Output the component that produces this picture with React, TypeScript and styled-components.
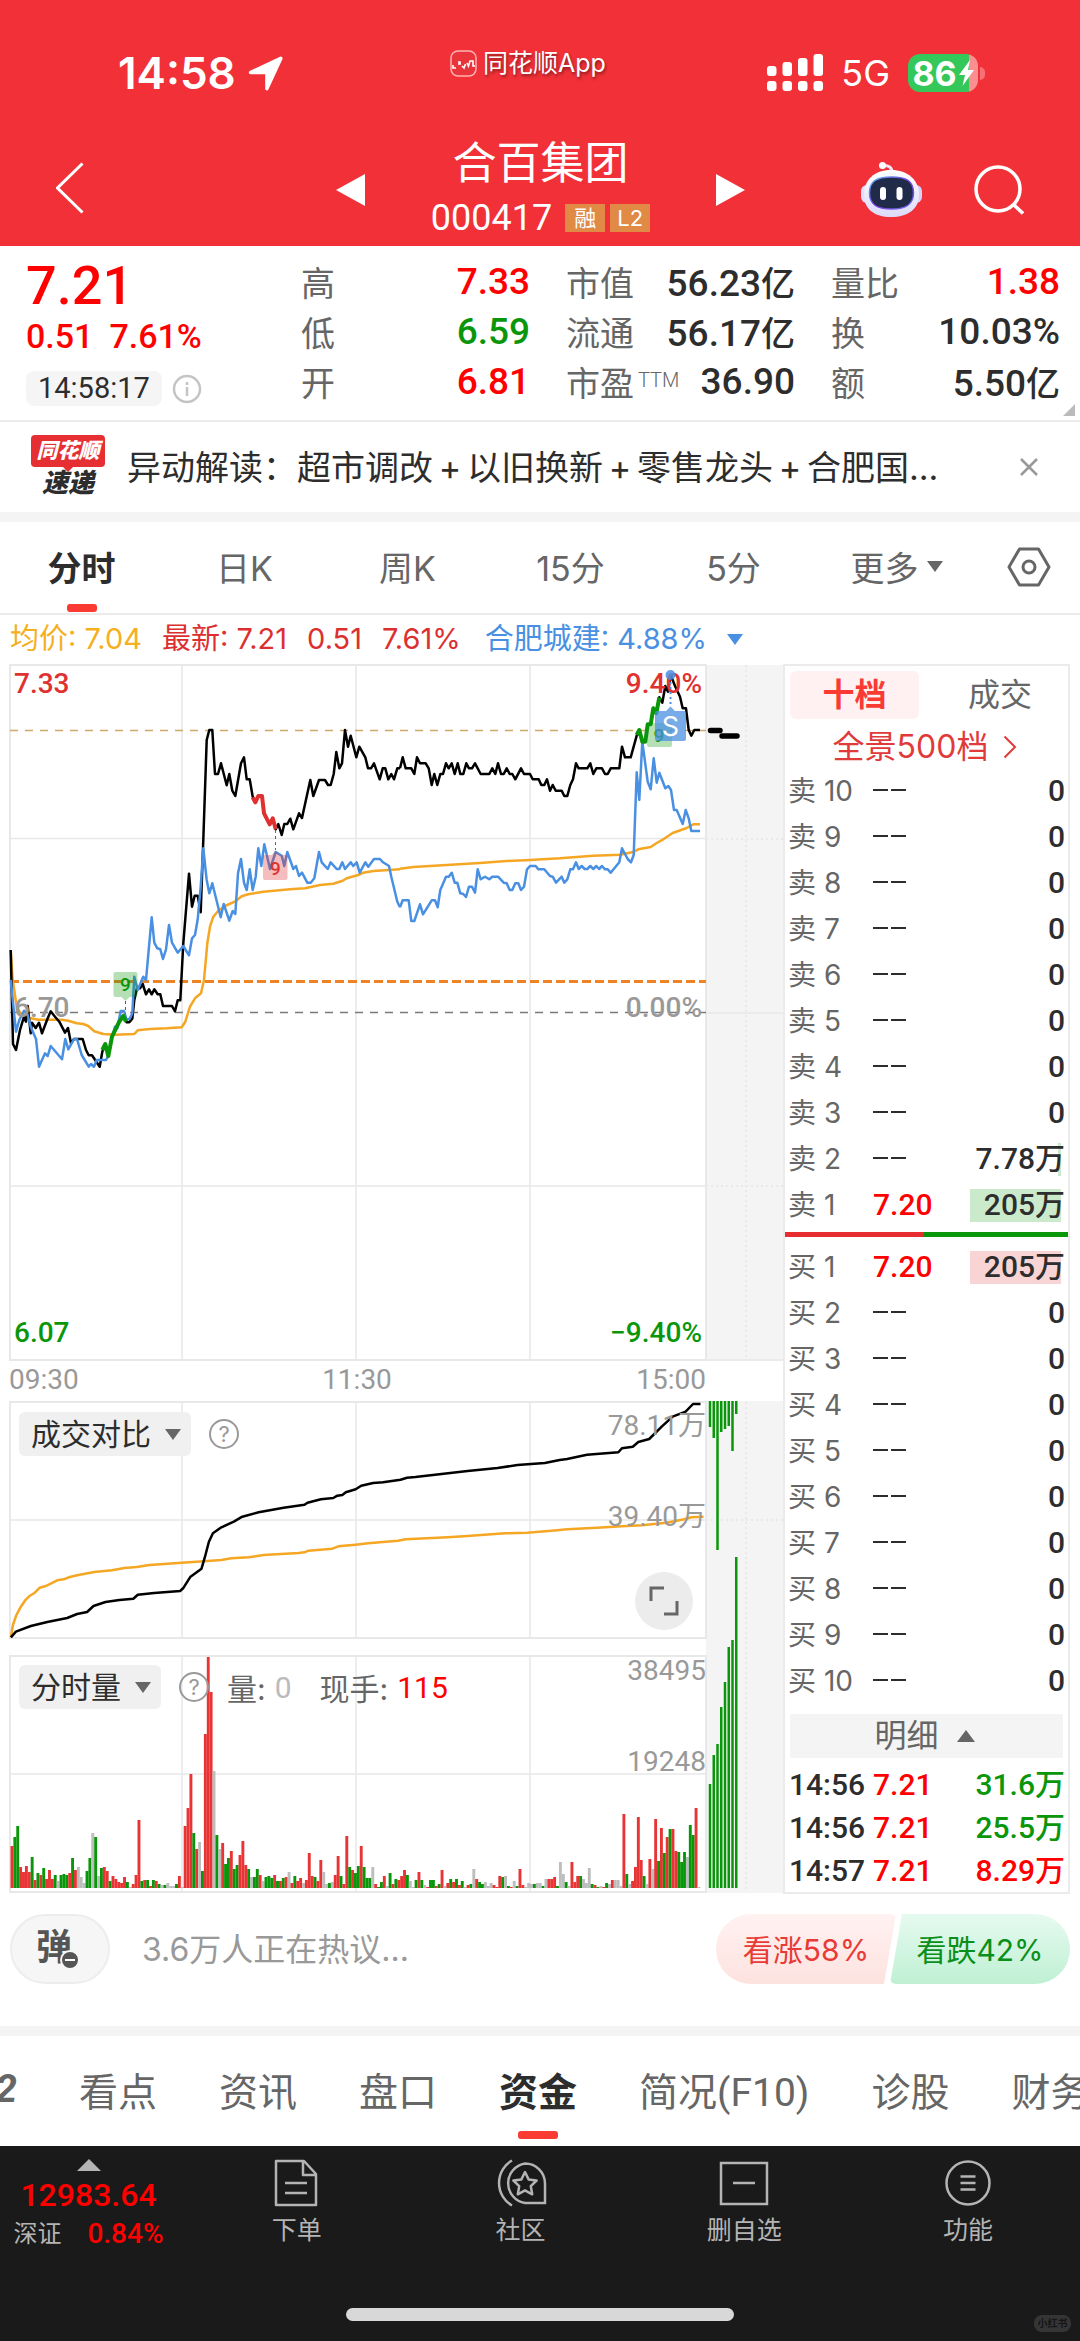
import React from "react";
import styled, { createGlobalStyle } from "styled-components";

const SANS = `"Inter", "Noto Sans CJK SC", sans-serif`;
const NUM = `"Roboto", "Noto Sans CJK SC", sans-serif`;

const C = {
  brand: "#f13037",
  red: "#ff0000",
  green: "#0a960a",
  ink: "#2d2d2d",
  sub: "#666666",
  mute: "#999999",
  line: "#ebebeb",
  band: "#f4f4f4",
  accent: "#f93b34",
  blue: "#4a90e2",
  orange: "#f5a623",
};

const Global = createGlobalStyle`
  *, *::before, *::after { box-sizing: border-box; }
  body { margin: 0; background: #fff; color: ${C.ink}; font-family: ${SANS}; }
  button, select { font: inherit; color: inherit; background: none; border: 0; padding: 0; margin: 0; }
  a { color: inherit; text-decoration: none; }
  dl, dd, h1, p { margin: 0; font-weight: 400; }
  svg { display: block; }
`;

const Page = styled.div`
  display: flex;
  flex-direction: column;
  min-height: 100vh;
  overflow: hidden;
`;

/* ---------- header ---------- */

const Header = styled.header`
  background: ${C.brand};
  color: #fff;
  padding-bottom: 4px;
`;

const StatusBar = styled.div`
  display: grid;
  grid-template-columns: 332px auto 1fr;
  align-items: center;
  padding: 46px 95px 0 118px;
  height: 98px;
`;

const Clock = styled.div`
  display: flex;
  align-items: center;
  gap: 12px;
  font-size: 44px;
  font-weight: 600;
`;

const AppTag = styled.div`
  display: flex;
  align-items: center;
  align-self: start;
  gap: 6px;
  font-size: 25px;
  line-height: 34px;
  text-shadow: 1px 2px 3px rgba(0, 0, 0, 0.45);
`;

const Signals = styled.div`
  display: flex;
  justify-content: flex-end;
  align-items: center;
  gap: 18px;
  font-size: 36px;
`;

const Battery = styled.div`
  display: flex;
  align-items: center;
  gap: 2px;
`;

const BatteryCell = styled.div`
  display: flex;
  align-items: center;
  justify-content: center;
  gap: 2px;
  width: 70px;
  height: 38px;
  border-radius: 12px;
  background: linear-gradient(to right, #34c759 87%, #f98f90 87%);
  font-size: 34px;
  font-weight: 700;
`;

const BatteryTip = styled.i`
  width: 5px;
  height: 13px;
  border-radius: 0 5px 5px 0;
  background: #f67075;
`;

const NavBar = styled.div`
  display: grid;
  grid-template-columns: 280px 1fr 279px;
  align-items: center;
  padding: 40px 56px 0;
`;

const IconButton = styled.button`
  display: inline-flex;
  cursor: pointer;
`;

const NavActions = styled.div`
  display: flex;
  justify-content: flex-end;
  align-items: center;
  gap: 52px;
`;

const TitleRow = styled.div`
  display: flex;
  justify-content: space-between;
  align-items: center;
`;

const StockTitle = styled.div`
  display: flex;
  flex-direction: column;
  align-items: center;
`;

const StockName = styled.h1`
  font-size: 44px;
  line-height: 50px;
`;

const CodeLine = styled.div`
  display: flex;
  align-items: center;
  gap: 5px;
  margin-top: 6px;
  font: 400 36px/48px ${NUM};
`;

const Badge = styled.span`
  width: 40px;
  margin-left: ${(p: { $first?: boolean }) => (p.$first ? "8px" : "0")};
  background: #e08a45;
  font: 400 22px/28px ${SANS};
  text-align: center;
`;

/* ---------- quote ---------- */

const Quote = styled.section`
  position: relative;
  display: grid;
  grid-template-columns: 239px repeat(3, 1fr);
  gap: 36px;
  padding: 10px 20px 14px 26px;
  border-bottom: 2px solid ${C.line};
  font-family: ${NUM};
`;

const LastPrice = styled.div`
  font-size: 54px;
  font-weight: 500;
  line-height: 60px;
  color: ${C.red};
`;

const Change = styled.div`
  display: flex;
  gap: 16px;
  font-size: 34px;
  font-weight: 500;
  line-height: 40px;
  color: ${C.red};
`;

const StampRow = styled.div`
  display: flex;
  align-items: center;
  gap: 10px;
  margin-top: 15px;
`;

const Stamp = styled.time`
  padding: 0 12px;
  border-radius: 8px;
  background: #f5f5f5;
  font-size: 29px;
  line-height: 35px;
`;

const Stats = styled.dl`
  display: grid;
  grid-auto-rows: 50px;
`;

const Stat = styled.div`
  display: flex;
  justify-content: space-between;
  align-items: center;
`;

const StatLabel = styled.dt`
  font-size: 34px;
  color: ${C.sub};

  sup {
    font: 300 20px ${NUM};
    vertical-align: 9px;
    margin-left: 4px;
  }
`;

const StatValue = styled.dd<{ $color?: string }>`
  font-size: 37px;
  font-weight: 500;
  color: ${(p) => p.$color || C.ink};

  span {
    font-size: 34px;
  }
`;

const Corner = styled.i`
  position: absolute;
  right: 5px;
  bottom: 4px;
  border-style: solid;
  border-width: 0 0 12px 12px;
  border-color: transparent transparent #bbb transparent;
`;

/* ---------- news ---------- */

const News = styled.section`
  display: flex;
  align-items: center;
  gap: 22px;
  height: 90px;
  padding: 0 42px 0 31px;
`;

const NewsLogo = styled.div`
  flex: none;
  width: 74px;
  font-style: italic;
  font-weight: 900;
  text-align: center;
`;

const LogoTop = styled.div`
  position: relative;
  border-radius: 4px;
  background: #e62f33;
  color: #fff;
  font-size: 21px;
  line-height: 32px;

  &::after {
    content: "";
    position: absolute;
    left: 32px;
    top: 32px;
    border: 5px solid transparent;
    border-top-color: #e62f33;
  }
`;

const LogoBottom = styled.div`
  font-size: 26px;
  line-height: 32px;
`;

const NewsText = styled.a`
  flex: 1;
  min-width: 0;
  overflow: hidden;
  white-space: nowrap;
  font-size: 34px;
  padding-bottom: 4px;
`;

const Plus = styled.span`
  display: inline-block;
  width: 34px;
  text-align: center;
`;

const Band = styled.div`
  height: 10px;
  background: ${C.band};
`;

/* ---------- period tabs ---------- */

const Periods = styled.nav`
  display: grid;
  grid-template-columns: repeat(6, 163fr) 102fr;
  border-bottom: 2px solid ${C.line};
`;

const Period = styled.button<{ $active?: boolean }>`
  display: flex;
  align-items: center;
  justify-content: center;
  position: relative;
  gap: 8px;
  height: 91px;
  padding-bottom: 2px;
  font-size: 34px;
  font-weight: ${(p) => (p.$active ? 700 : 400)};
  color: ${(p) => (p.$active ? C.ink : C.sub)};

  &::after {
    content: "";
    display: ${(p) => (p.$active ? "block" : "none")};
    position: absolute;
    bottom: 1px;
    width: 30px;
    height: 8px;
    border-radius: 3px;
    background: ${C.accent};
  }
`;

const Legend = styled.div`
  display: flex;
  align-items: center;
  gap: 20px;
  padding: 3px 10px 0;
  font-size: 29px;
  line-height: 42px;
  white-space: nowrap;
`;

const LegendItem = styled.span<{ $color: string; $wide?: boolean }>`
  color: ${(p) => p.$color};
  margin-left: ${(p) => (p.$wide ? "4px" : "0")};
`;

const Down = styled.i<{ $color?: string; $size?: number }>`
  border-style: solid;
  border-width: ${(p) => `11px ${p.$size || 8}px 0`};
  border-color: ${(p) => p.$color || C.sub} transparent transparent;
`;

const Up = styled.i<{ $color?: string; $size?: number }>`
  border-style: solid;
  border-width: ${(p) => `0 ${p.$size || 9}px 12px`};
  border-color: transparent transparent ${(p) => p.$color || C.sub};
`;

/* ---------- charts ---------- */

const Market = styled.section`
  display: grid;
  grid-template-columns: minmax(0, 1fr) 287px;
  align-items: start;
  padding-right: 10px;
`;

const ChartBox = styled.div`
  position: relative;

  > svg {
    width: 100%;
    height: auto;
  }
`;

const ChartTools = styled.div<{ $top: number }>`
  position: absolute;
  left: 19px;
  top: ${(p) => p.$top}px;
  display: flex;
  align-items: center;
  font-size: 30px;
  color: ${C.sub};
`;

const Picker = styled.label`
  display: flex;
  align-items: center;
  gap: 14px;
  height: 44px;
  padding: 0 10px 0 12px;
  border-radius: 6px;
  background: #f0f0f0;
  color: ${C.ink};

  select {
    appearance: none;
    line-height: 44px;
    height: 44px;
  }
`;

const Help = styled.button`
  width: 30px;
  height: 30px;
  margin: 0 18px;
  border: 2px solid ${C.mute};
  border-radius: 50%;
  color: ${C.mute};
  font-size: 22px;
  line-height: 26px;
`;

const Reading = styled.span<{ $color: string }>`
  margin: 0 28px 0 9px;
  font-family: ${NUM};
  color: ${(p) => p.$color};
`;

const Expand = styled.button`
  position: absolute;
  left: 635px;
  top: 912px;
  display: flex;
  align-items: center;
  justify-content: center;
  width: 58px;
  height: 58px;
  border-radius: 50%;
  background: #ececec;
`;

type Frame = { ox: number; oy: number; sx: number; sy: number };

const plot = (raw: string, f: Frame) =>
  raw
    .trim()
    .split(/\s+/)
    .map((p) => {
      const [x, y] = p.split(",").map(Number);
      return `${(f.ox + x * f.sx).toFixed(1)},${(f.oy + y * f.sy).toFixed(1)}`;
    })
    .join(" ");

const AM: Frame = { ox: 0, oy: 0, sx: 1 / 3, sy: 1 / 3 };
const PM: Frame = { ox: 380, oy: 0, sx: 1 / 3, sy: 1 / 3 };
const TURNOVER: Frame = { ox: 0, oy: 630, sx: 0.4975, sy: 1 / 3 };

const PRICE_AM = `32,870 39,1152 48,1170 60,1110 72,1070 78,1085 83,1038 92,1120 96,1088 107,1104 117,1088 126,1120 143,1075
152,1054 165,1070 178,1085 195,1118 204,1104 213,1150 222,1137 248,1137 258,1170 266,1186 276,1186 299,1220 307,1175 316,1152
325,1188 336,1130 358,1085 370,1068 380,1087 388,1087 397,1076 403,1020 412,980 420,985 428,972 438,1003 447,988 455,1003 463,988
473,1003 481,1003 489,1038 516,1038 525,1054 533,1021 541,1021 550,850 567,641 576,740 584,707 593,707 602,757 610,540 620,240
628,210 637,210 645,342 654,342 663,310 680,376 688,342 697,392 706,408 723,310 732,292 740,358 749,358 758,410 766,427 775,408
786,408 792,460 809,493 818,475 827,508 835,492 845,525 853,492 862,492 871,476 880,508 897,460 906,474 931,360 940,408 957,360
975,360 984,375 992,375 1001,342 1009,276 1018,325 1026,310 1035,210 1044,260 1052,227 1069,292 1078,260 1096,292 1104,325
1113,325 1122,310 1139,358 1148,325 1156,325 1165,358 1174,342 1182,358 1192,325 1200,325`;

const PRICE_PM = `60,325 68,292 77,325 94,325 103,342 111,292 120,310 137,310 146,325 155,375 163,342 172,375 181,342 189,342
198,310 206,325 215,310 224,342 233,310 241,342 250,342 259,310 267,325 276,325 285,310 302,342 328,342 337,325 346,342 354,310
363,342 371,342 380,325 389,342 397,342 406,358 423,325 432,342 450,342 458,358 476,358 484,375 493,375 501,358 510,392 518,375
527,392 545,392 553,408 562,408 571,375 579,358 588,310 596,325 622,325 631,310 640,342 649,325 666,325 675,342 683,342 692,325
718,325 726,260 735,292 752,292 770,227 778,210 787,245 796,245 803,193 812,193 820,145 829,160 838,112 847,128 856,78 864,95
872,45 885,78 900,110 908,145 918,145 926,210 934,227 943,210 960,210`;

const AVG_AM = `32,870 38,960 50,1040 62,1060 85,1073 115,1079 185,1079 205,1082 230,1090 250,1092 265,1098 283,1114 310,1122
345,1124 403,1122 413,1111 450,1107 500,1105 545,1102 556,1085 570,1040 585,1015 603,1000 612,960 622,850 630,800 640,770 655,752
675,738 706,724 725,709 745,703 790,695 870,688 915,685 960,675 1000,671 1028,662 1040,655 1075,645 1090,638 1120,633 1200,628`;

const AVG_PM = `60,626 100,621 200,615 300,609 380,603 450,600 540,595 600,590 640,587 720,584 760,576 775,568 812,561 830,549
850,538 878,519 920,504 940,493 960,493`;

const PEER_AM = `32,960 48,1115 58,1080 72,1052 83,1065 92,1100 108,1137 117,1220 135,1180 143,1188 152,1158 186,1198 196,1137
205,1168 222,1137 231,1137 245,1185 266,1220 273,1212 282,1220 290,1200 318,1200 325,1188 335,1135 345,1100 352,1105 362,1053
372,1053 380,1080 390,1075 397,1060 403,950 413,990 430,950 438,960 447,860 455,772 463,848 472,865 481,868 489,897 498,868
507,795 516,848 533,878 550,858 567,886 576,835 585,825 593,778 602,680 610,565 620,660 628,700 637,670 662,772 671,732 688,782
698,753 706,762 714,640 723,597 732,668 740,690 749,628 758,690 767,650 775,565 784,618 793,553 810,627 827,576 845,587 853,618
862,576 880,627 888,618 897,648 906,638 922,668 932,668 943,655 957,576 965,607 983,627 992,607 1010,627 1018,627 1027,607
1035,627 1052,607 1060,618 1070,607 1079,638 1096,607 1105,620 1122,597 1140,597 1149,607 1167,618 1174,650 1192,725 1200,742`;

const PEER_PM = `60,742 68,721 86,721 94,783 103,783 120,733 129,763 155,721 165,721 173,742 181,690 198,650 206,650 215,638
224,668 232,668 241,700 250,702 258,711 267,680 276,680 285,698 293,628 302,658 315,650 328,658 337,650 354,650 371,668 380,670
389,690 397,690 406,670 415,670 423,690 432,680 441,628 450,618 467,618 475,628 493,628 510,648 518,650 528,668 545,650 553,668
562,658 571,628 579,628 588,607 596,627 605,618 614,627 622,627 631,618 640,627 649,618 657,627 666,618 675,628 683,628 692,638
718,607 726,565 743,597 753,607 761,585 770,337 778,420 787,245 803,365 812,388 821,295 830,368 838,338 856,385 865,378 873,390
882,450 890,450 908,492 917,450 926,475 934,513 960,513`;

const TODAY = `22,1042 32,1025 62,1008 95,996 135,984 155,972 175,966 188,948 212,936 240,930 268,926 277,914 310,909 362,903
368,895 383,860 405,836 412,800 420,755 428,730 445,712 470,695 487,680 520,667 570,653 612,644 618,638 645,628 670,624 678,617
688,615 695,607 715,598 726,587 750,579 770,577 805,569 818,563 835,561 940,543 1000,534 1040,525 1095,519 1125,510 1140,507
1180,494 1243,487 1250,475 1272,470 1283,456 1305,447 1330,410 1352,380 1378,365 1393,342 1408,342`;

const PREVIOUS = `22,1042 26,1005 33,975 40,955 50,932 60,917 70,908 80,893 92,888 103,880 115,871 128,868 140,861 160,854
190,846 225,841 250,834 275,831 300,825 330,822 365,818 410,814 445,810 465,805 500,802 530,795 600,789 612,787 620,782 668,776
680,769 715,764 740,760 800,752 815,748 900,742 940,738 1015,730 1060,728 1120,721 1140,718 1200,713 1250,709 1290,706 1340,698
1375,688 1390,682 1414,680`;

/* one entry per minute: r = up, g = down, n = flat, followed by the bar height */
const VOLUME = `r42 g51 g62 r21 r16 r22 r16 g31 r8 g15 r13 g20 r9 r18 r9 g13 n7 g13 g14 g13 r15 g30 r18 n21 n11 n5 g17 g30
n55 g51 n12 g20 r21 r17 g7 r12 r9 r6 r5 r11 g6 n1 r4 r13 r68 g7 r8 g8 r2 g8 r7 g4 n3 g3 n5 n2 n2 g4 r12 n1 r62 r80 r114 g55
r39 n46 g17 r154 r231 r196 n117 g53 n39 r45 g24 g30 r37 g19 g23 r33 r47 r23 g19 n11 g11 g19 r13 n7 g11 g12 g10 r13 g7 r7 g10
r11 n16 r5 g12 r7 r10 n5 r8 r35 r12 g11 r7 r28 n16 n4 g5 n6 r13 r32 g12 r4 r52 g21 r18 g15 g22 r42 g21 g10 g10 n21 r4 g1 g6
r12 n2 g15 r4 g9 r8 r12 r18 g13 n7 n1 g8 r16 g8 n3 r1 g8 g8 r2 g4 r18 n2 r5 g9 r6 g9 r3 g7 n1 r3 g4 n19 r9 g6 g4 n6 n2 n5 r3
r1 r12 g11 n12 g2 r1 n7 g2 r19 r3 n1 n5 n4 g4 n5 n5 g2 n9 r9 r9 r11 g2 n26 n14 g6 n2 r26 r6 r12 g12 n9 n5 n20 g4 r3 g1 n2 r1
g5 n4 r8 n8 n8 n2 r74 g14 n4 r7 r21 r71 r28 g12 n4 r29 n19 r69 g27 r60 g35 r51 g59 r59 r37 g36 g26 g36 n31 g63 g53 r80 n1`;

const BAR_COLOR: Record<string, string> = { r: "#e83434", g: "#0a960a", n: "#bdbdbd" };

const AFTER_TOP = [767, 778, 890, 772, 769, 766, 791, 754];
const AFTER_VOLUME = [1124, 1095, 1084, 1047, 1022, 987, 980, 897];

const Label = styled.text<{ $end?: boolean; $mid?: boolean; $bold?: boolean }>`
  font-family: ${NUM};
  font-size: 28px;
  font-weight: ${(p) => (p.$bold ? 500 : 400)};
  text-anchor: ${(p) => (p.$end ? "end" : p.$mid ? "middle" : "start")};
`;

function Charts() {
  const bars = VOLUME.trim().split(/\s+/);
  const step = 687 / (bars.length - 1);
  const line = { fill: "none", strokeLinejoin: "round" as const };
  return (
    <svg viewBox="0 0 783 1233" role="img" aria-label="分时走势">
      <rect x="706" y="5" width="77" height="696" fill={C.band} />
      <rect x="706" y="741" width="77" height="492" fill={C.band} />
      <g stroke="#e8e8e8" strokeWidth="2" fill="none">
        <rect x="10" y="5" width="696" height="695" />
        <rect x="10" y="742" width="696" height="236" />
        <rect x="10" y="996" width="696" height="236" />
        <path d="M10 178.500H706M10 526H706M10 860H706M10 1114H706" strokeWidth="1.500" />
        {[182, 356, 530].map((x) => (
          <path key={x} d={`M${x} 5V700M${x} 742V978M${x} 996V1232`} strokeWidth="1.500" />
        ))}
        <path d="M746 5V700M746 742V1232M706 179H783M706 526H783M706 860H783" stroke="#e9e9e9" strokeDasharray="2 3" />
        <path d="M706 353H783M706 700H783" stroke="#ebebeb" />
      </g>

      <path d="M10 70.500H706" stroke="#cfa968" strokeWidth="1.500" strokeDasharray="8 7" />
      <path d="M10 352.500H706" stroke="#7a7a7a" strokeWidth="1.500" strokeDasharray="8 7" />
      <path d="M10 321.500H706" stroke="#ef8222" strokeWidth="2.800" strokeDasharray="9 4" />

      <g {...line} stroke={C.orange} strokeWidth="2.500">
        <polyline points={plot(AVG_AM, AM)} />
        <polyline points={plot(AVG_PM, PM)} />
        <polyline points={plot(PREVIOUS, TURNOVER)} />
      </g>
      <g {...line} stroke="#000" strokeWidth="2.500">
        <polyline points={plot(PRICE_AM, AM)} />
        <polyline points={plot(PRICE_PM, PM)} />
        <polyline points={plot(TODAY, TURNOVER)} />
      </g>
      <g {...line} stroke={C.blue} strokeWidth="2.500">
        <polyline points={plot(PEER_AM, AM)} />
        <polyline points={plot(PEER_PM, PM)} />
      </g>
      <g {...line} strokeWidth="4">
        <polyline points={plot("307,1170 316,1152 325,1188 336,1130 358,1085 370,1068 378,1085", AM)} stroke="#0a960a" />
        <polyline points={plot("758,412 766,427 775,408 786,408 792,460 809,493 818,475 827,508", AM)} stroke="#e03131" />
        <polyline
          points={plot("770,225 778,210 787,245 796,245 803,193 812,193 820,145 829,160 838,112", PM)}
          stroke="#0a960a"
        />
      </g>
      <path d="M710.500 70.500H720M722 76H737" stroke="#000" strokeWidth="5.500" strokeLinecap="round" />

      <Label x="14" y="33" fill="#e03131" $bold>7.33</Label>
      <Label x="702" y="33" fill="#e03131" $end $bold>9.40%</Label>
      <Label x="14" y="357" fill={C.mute} $bold>6.70</Label>
      <Label x="702" y="357" fill={C.mute} $end $bold>0.00%</Label>
      <Label x="14" y="682" fill={C.green} $bold>6.07</Label>
      <Label x="702" y="682" fill={C.green} $end $bold>−9.40%</Label>
      <Label x="9" y="729" fill={C.mute}>09:30</Label>
      <Label x="357" y="729" fill={C.mute} $mid>11:30</Label>
      <Label x="706" y="729" fill={C.mute} $end>15:00</Label>

      <path d="M125.500 341V354" stroke={C.green} strokeDasharray="3 3" />
      <path d="M115.500 312h20a2 2 0 0 1 2 2v21a2 2 0 0 1-2 2h-6l-4 4-4-4h-6a2 2 0 0 1-2-2v-21a2 2 0 0 1 2-2z" fill="#0a960a" opacity="0.300" />
      <text x="125.500" y="331" textAnchor="middle" fontFamily="Roboto" fontSize="19" fontWeight="500" fill={C.green}>9</text>
      <path d="M275.500 170V190" stroke="#e03131" strokeDasharray="3 3" />
      <path d="M265 195h6.500l4-4 4 4h6a2 2 0 0 1 2 2v21a2 2 0 0 1-2 2h-20.500a2 2 0 0 1-2-2v-21a2 2 0 0 1 2-2z" fill="#e03131" opacity="0.320" />
      <text x="275.500" y="215" textAnchor="middle" fontFamily="Roboto" fontSize="19" fontWeight="500" fill="#e03131">9</text>
      <rect x="647" y="63" width="25" height="24" rx="2" fill="#0a960a" opacity="0.300" />
      <text x="659" y="82" textAnchor="middle" fontFamily="Roboto" fontSize="19" fontWeight="500" fill={C.green}>9</text>
      <circle cx="670.500" cy="15" r="5" fill={C.blue} opacity="0.850" />
      <path d="M670.500 22V46" stroke={C.blue} strokeWidth="2" strokeDasharray="2 3" />
      <path d="M657 51h9l4.500-4.500 4.500 4.500h9a2 2 0 0 1 2 2v26a2 2 0 0 1-2 2h-27a2 2 0 0 1-2-2v-26a2 2 0 0 1 2-2z" fill={C.blue} opacity="0.750" />
      <text x="670.500" y="76" textAnchor="middle" fontFamily="Inter" fontSize="27" fill="#fff">S</text>

      <Label x="706" y="775" fill={C.mute} $end>78.11万</Label>
      <Label x="706" y="866" fill={C.mute} $end>39.40万</Label>
      <g stroke="#0a960a" strokeWidth="2.500">
        {AFTER_TOP.map((y, i) => (
          <path key={i} d={`M${710 + i * 3.75} 741V${y}`} />
        ))}
        {AFTER_VOLUME.map((y, i) => (
          <path key={i} d={`M${710 + i * 3.75} 1228V${y}`} />
        ))}
      </g>

      {bars.map((b, i) => {
        const h = Number(b.slice(1));
        return <rect key={i} x={10.5 + i * step} y={1228 - h} width="2.900" height={h} fill={BAR_COLOR[b[0]]} />;
      })}
      <Label x="706" y="1020" fill={C.mute} $end>38495</Label>
      <Label x="706" y="1111" fill={C.mute} $end>19248</Label>
    </svg>
  );
}

/* ---------- order book ---------- */

const Book = styled.aside`
  margin-top: 4px;
  border: 2px solid ${C.line};
  padding: 5px 0 0;
`;

const BookTabs = styled.div`
  display: grid;
  grid-template-columns: 129px 1fr;
  padding: 0 5px;
`;

const BookTab = styled.button<{ $active?: boolean }>`
  height: 48px;
  border-radius: 6px;
  background: ${(p) => (p.$active ? "#fff1f1" : "transparent")};
  color: ${(p) => (p.$active ? C.accent : C.sub)};
  font-size: 32px;
  line-height: 48px;
  font-weight: ${(p) => (p.$active ? 700 : 400)};
  padding-left: ${(p) => (p.$active ? "0" : "18px")};
`;

const DepthLink = styled.a`
  display: flex;
  align-items: center;
  justify-content: center;
  gap: 15px;
  padding: 6px 3px 0 0;
  font-size: 32px;
  line-height: 43px;
  color: #e03a3a;
`;

const Levels = styled.table`
  width: 100%;
  table-layout: fixed;
  border-collapse: collapse;
  font: 500 30px ${NUM};

  td,
  th {
    padding: 0;
    line-height: 46px;
    height: 46px;
    white-space: nowrap;
  }
`;

const LevelName = styled.th`
  width: 88px;
  text-align: left;
  padding-left: 3px !important;
  font: 400 28px ${SANS};
  color: ${C.sub};
`;

const LevelPrice = styled.td<{ $on?: boolean }>`
  width: 76px;
  color: ${(p) => (p.$on ? C.red : C.ink)};
`;

const LevelQty = styled.td<{ $bar?: number; $tint?: string }>`
  padding-right: 3px !important;
  text-align: right;
  background: ${(p) =>
    p.$bar ? `linear-gradient(${p.$tint}, ${p.$tint}) no-repeat right 7px center / ${p.$bar}px 33px` : "none"};
`;

const Dash = styled.span`
  display: inline-block;
  width: 15px;
  height: 2px;
  margin-right: 3px;
  background: ${C.ink};
  vertical-align: 10px;
`;

const Ratio = styled.div`
  height: 5px;
  margin: 4px 0 7px;
  background: linear-gradient(to right, #e62e31 49%, ${C.green} 49%);
`;

const DetailBar = styled.button`
  display: flex;
  align-items: center;
  justify-content: center;
  gap: 18px;
  width: calc(100% - 10px);
  height: 44px;
  margin: 10px 5px 5px;
  padding-right: 4px;
  background: ${C.band};
  font-size: 32px;
  line-height: 44px;
  color: ${C.sub};
`;

const Ticks = styled(Levels)`
  td {
    height: 43px;
    line-height: 43px;
  }
`;

const Tick = styled.td<{ $color?: string; $w?: number; $end?: boolean }>`
  width: ${(p) => (p.$w ? `${p.$w}px` : "auto")};
  padding: ${(p) => (p.$end ? "0 3px 0 0" : "0")} !important;
  text-align: ${(p) => (p.$end ? "right" : "left")};
  color: ${(p) => p.$color || C.ink};
  text-indent: ${(p) => (p.$color ? "0" : "4px")};
`;

type Level = { name: string; price?: string; qty: string; bar?: number };

const SELLS: Level[] = [10, 9, 8, 7, 6, 5, 4, 3].map((n) => ({ name: `卖 ${n}`, qty: "0" }) as Level);
SELLS.push({ name: "卖 2", qty: "7.78万", bar: 3 }, { name: "卖 1", price: "7.20", qty: "205万", bar: 91 });
const BUYS: Level[] = [{ name: "买 1", price: "7.20", qty: "205万", bar: 91 }];
for (let n = 2; n <= 10; n++) BUYS.push({ name: `买 ${n}`, qty: "0" });

function LevelTable({ rows, tint }: { rows: Level[]; tint: string }) {
  return (
    <Levels>
      <tbody>
        {rows.map((r) => (
          <tr key={r.name}>
            <LevelName scope="row">{r.name}</LevelName>
            <LevelPrice $on={!!r.price}>
              {r.price || (
                <>
                  <Dash />
                  <Dash />
                </>
              )}
            </LevelPrice>
            <LevelQty $bar={r.bar} $tint={tint}>{r.qty}</LevelQty>
          </tr>
        ))}
      </tbody>
    </Levels>
  );
}

/* ---------- discussion ---------- */

const Talk = styled.section`
  display: flex;
  align-items: center;
  padding: 20px 10px 42px;
`;

const Danmu = styled.button`
  position: relative;
  width: 100px;
  height: 70px;
  border: 2px solid #ededed;
  border-radius: 35px;
  background: #f6f6f6;
  color: #555;
  font-size: 36px;
  line-height: 60px;
  font-weight: 700;
  padding: 0 12px 4px 0;
`;

const DanmuOff = styled.i`
  position: absolute;
  left: 48px;
  top: 34px;
  width: 20px;
  height: 20px;
  border: 2px solid #f6f6f6;
  border-radius: 50%;
  background: linear-gradient(#fff, #fff) no-repeat center / 10px 2px #555;
`;

const TalkHint = styled.a`
  flex: 1;
  margin-left: 32px;
  padding-bottom: 4px;
  font-size: 32px;
  color: ${C.mute};
`;

const Vote = styled.div`
  display: flex;
`;

const VoteButton = styled.button<{ $bull?: boolean }>`
  width: 180px;
  height: 70px;
  margin-left: ${(p) => (p.$bull ? "0" : "-6px")};
  padding-bottom: 2px;
  font-size: 30px;
  border-radius: ${(p) => (p.$bull ? "35px 6px 6px 35px" : "6px 35px 35px 6px")};
  clip-path: ${(p) =>
    p.$bull ? "polygon(0 0, 100% 0, 168px 100%, 0 100%)" : "polygon(12px 0, 100% 0, 100% 100%, 0 100%)"};
  background: ${(p) =>
    p.$bull ? "linear-gradient(#fff2f1, #fde2df)" : "linear-gradient(#e6faf0, #bff0d3)"};
  color: ${(p) => (p.$bull ? "#e83a36" : "#0a8f1a")};
`;

/* ---------- section tabs ---------- */

const Sections = styled.nav`
  display: flex;
  gap: 62px;
  height: 110px;
  overflow: hidden;
  white-space: nowrap;
  font-family: ${NUM};
`;

const Section = styled.a<{ $active?: boolean; $cut?: boolean }>`
  position: relative;
  flex: none;
  display: flex;
  align-items: center;
  justify-content: ${(p) => (p.$cut ? "flex-end" : "center")};
  width: ${(p) => (p.$cut ? "17px" : "auto")};
  padding-bottom: 4px;
  overflow: hidden;
  font-size: 39px;
  font-style: ${(p) => (p.$cut ? "italic" : "normal")};
  font-weight: ${(p) => (p.$active || p.$cut ? 700 : 400)};
  color: ${(p) => (p.$active ? C.ink : C.sub)};

  &::after {
    content: "";
    display: ${(p) => (p.$active ? "block" : "none")};
    position: absolute;
    bottom: 7px;
    width: 40px;
    height: 8px;
    border-radius: 3px;
    background: ${C.accent};
  }
`;

/* ---------- bottom bar ---------- */

const Footer = styled.footer`
  position: relative;
  flex: 1;
  display: flex;
  flex-direction: column;
  justify-content: space-between;
  background: #1a1a1a;
  color: #b4b4b4;
  padding: 13px 0 20px;
`;

const Dock = styled.div`
  display: grid;
  grid-template-columns: 185px repeat(4, 1fr);
`;

const IndexCell = styled.a`
  display: flex;
  flex-direction: column;
  align-items: center;
  padding-right: 8px;
  font-family: ${NUM};
  font-weight: 500;
  color: ${C.red};
`;

const IndexValue = styled.div`
  font-size: 32px;
  line-height: 36px;
  margin: 6px 0 4px;
`;

const IndexChange = styled.div`
  display: flex;
  align-items: center;
  gap: 26px;
  font-size: 28px;
  line-height: 34px;

  span {
    font-size: 24px;
    font-weight: 400;
    color: #b4b4b4;
  }
`;

const DockItem = styled.button`
  display: flex;
  flex-direction: column;
  align-items: center;
  gap: 5px;
  font-size: 25px;
  line-height: 36px;
`;

const HomeBar = styled.div`
  width: 36%;
  height: 13px;
  margin: 0 auto;
  border-radius: 7px;
  background: #d8d8d8;
`;

const Watermark = styled.span`
  position: absolute;
  right: 9px;
  bottom: 9px;
  width: 37px;
  border-radius: 8px;
  background: #353535;
  color: #161616;
  font-size: 10px;
  font-weight: 700;
  line-height: 17px;
  text-align: center;
`;

const dockIcon = { width: 52, height: 48, viewBox: "0 0 52 48", fill: "none", stroke: "#b4b4b4", strokeWidth: 2.5 };

export default function App() {
  return (
    <Page lang="zh-CN">
      <Global />
      <Header>
        <StatusBar>
          <Clock>
            14:58
            <svg width="35" height="35" viewBox="0 0 35 35" fill="#fff">
              <path d="M32.500.600a2 2 0 0 1 2 2.400L20.500 33.200c-.900 1.900-3.300 1.400-3.300-.800V18.300H2.800C.500 18.300.100 15.800 2 14.800z" />
            </svg>
          </Clock>
          <AppTag>
            <svg width="27" height="27" viewBox="0 0 27 27" fill="none">
              <rect x="1" y="1" width="25" height="25" rx="7" fill="#e8343a" stroke="#ffb3b3" strokeWidth="1.500" />
              <path d="M3 15v3h3M8 12h2v2H8M12 16l2 2 1.500-4M17 13l1.500 3 1.500-5h3v5h2" stroke="#fff" strokeWidth="1.600" />
            </svg>
            同花顺App
          </AppTag>
          <Signals>
            <svg width="56" height="38" viewBox="0 0 56 38" fill="#fff">
              {[12, 8, 4, 0].map((y, i) => (
                <g key={y}>
                  <rect x={i * 15.5} y={y} width="9.500" height={22 - y} rx="3" />
                  <rect x={i * 15.5} y="27" width="9.500" height="10" rx="3" />
                </g>
              ))}
            </svg>
            5G
            <Battery>
              <BatteryCell>
                86
                <svg width="15" height="26" viewBox="0 0 15 26" fill="#fff">
                  <path d="M11 0 0 15h6L3.500 26 15 10H9z" />
                </svg>
              </BatteryCell>
              <BatteryTip />
            </Battery>
          </Signals>
        </StatusBar>
        <NavBar>
          <div>
            <IconButton aria-label="返回">
              <svg width="28" height="52" viewBox="0 0 28 52" fill="none" stroke="#fff" strokeWidth="3">
                <path d="M26.500 1.500 1.500 26l25 24.500" />
              </svg>
            </IconButton>
          </div>
          <TitleRow>
            <IconButton aria-label="上一只">
              <svg width="29" height="32" viewBox="0 0 29 32" fill="#fff"><path d="M29 0v32L0 16z" /></svg>
            </IconButton>
            <StockTitle>
              <StockName>合百集团</StockName>
              <CodeLine>
                000417<Badge $first>融</Badge><Badge>L2</Badge>
              </CodeLine>
            </StockTitle>
            <IconButton aria-label="下一只">
              <svg width="29" height="32" viewBox="0 0 29 32" fill="#fff"><path d="M0 0v32l29-16z" /></svg>
            </IconButton>
          </TitleRow>
          <NavActions>
            <IconButton aria-label="智能助手">
              <svg width="61" height="58" viewBox="0 0 61 58">
                <defs>
                  <linearGradient id="shell" x1="0" y1="0" x2="0" y2="1">
                    <stop offset="0" stopColor="#ffffff" />
                    <stop offset="1" stopColor="#dcdafa" />
                  </linearGradient>
                  <linearGradient id="visor" x1="0" y1="0" x2="1" y2="1">
                    <stop offset="0" stopColor="#5bb7e8" />
                    <stop offset="0.5" stopColor="#7a3fe0" />
                    <stop offset="1" stopColor="#6a6cf0" />
                  </linearGradient>
                </defs>
                <path d="M31 11c0-5-4-7-9-6.500" stroke="#f3e4f2" strokeWidth="3" fill="none" />
                <circle cx="21.500" cy="4.500" r="3.500" fill="#fff" />
                <rect x="0" y="24" width="12" height="18" rx="6" fill="#e2dffc" />
                <rect x="49" y="24" width="12" height="18" rx="6" fill="#d5d1fb" />
                <path d="M30 9c17 0 28 10 28 25 0 14-11 22-28 22S3 48 3 34C3 19 13 9 30 9z" fill="url(#shell)" />
                <path
                  d="M30.500 16c15 0 22 4 22 16s-8 16-22 16-22-4-22-16 7-16 22-16z"
                  fill="#202b4a"
                  stroke="url(#visor)"
                  strokeWidth="1.500"
                />
                <rect x="19" y="26" width="6" height="13" rx="3" fill="#fff" />
                <rect x="35.500" y="26" width="6" height="13" rx="3" fill="#fff" />
              </svg>
            </IconButton>
            <IconButton aria-label="搜索">
              <svg width="50" height="50" viewBox="0 0 50 50" fill="none" stroke="#fff" strokeWidth="3.500">
                <circle cx="24" cy="24" r="22" />
                <path d="M39.500 39.500l9.500 9" />
              </svg>
            </IconButton>
          </NavActions>
        </NavBar>
      </Header>

      <Quote>
        <div>
          <LastPrice>7.21</LastPrice>
          <Change>
            <span>0.51</span>
            <span>7.61%</span>
          </Change>
          <StampRow>
            <Stamp>14:58:17</Stamp>
            <svg width="30" height="30" viewBox="0 0 30 30" fill="none" stroke="#c4c4c4" strokeWidth="2.500">
              <circle cx="15" cy="15" r="13" />
              <path d="M15 13v9M15 8v3" />
            </svg>
          </StampRow>
        </div>
        <Stats>
          <Stat><StatLabel>高</StatLabel><StatValue $color={C.red}>7.33</StatValue></Stat>
          <Stat><StatLabel>低</StatLabel><StatValue $color={C.green}>6.59</StatValue></Stat>
          <Stat><StatLabel>开</StatLabel><StatValue $color={C.red}>6.81</StatValue></Stat>
        </Stats>
        <Stats>
          <Stat><StatLabel>市值</StatLabel><StatValue>56.23<span>亿</span></StatValue></Stat>
          <Stat><StatLabel>流通</StatLabel><StatValue>56.17<span>亿</span></StatValue></Stat>
          <Stat><StatLabel>市盈<sup>TTM</sup></StatLabel><StatValue>36.90</StatValue></Stat>
        </Stats>
        <Stats>
          <Stat><StatLabel>量比</StatLabel><StatValue $color={C.red}>1.38</StatValue></Stat>
          <Stat><StatLabel>换</StatLabel><StatValue>10.03%</StatValue></Stat>
          <Stat><StatLabel>额</StatLabel><StatValue>5.50<span>亿</span></StatValue></Stat>
        </Stats>
        <Corner />
      </Quote>

      <News>
        <NewsLogo>
          <LogoTop>同花顺</LogoTop>
          <LogoBottom>速递</LogoBottom>
        </NewsLogo>
        <NewsText href="#news">
          异动解读：超市调改<Plus>+</Plus>以旧换新<Plus>+</Plus>零售龙头<Plus>+</Plus>合肥国...
        </NewsText>
        <IconButton aria-label="关闭">
          <svg width="18" height="20" viewBox="0 0 18 20" stroke="#999" strokeWidth="2.500">
            <path d="M1 2l16 16M17 2L1 18" />
          </svg>
        </IconButton>
      </News>
      <Band />

      <Periods>
        <Period $active>分时</Period>
        <Period>日K</Period>
        <Period>周K</Period>
        <Period>15分</Period>
        <Period>5分</Period>
        <Period>更多<Down /></Period>
        <Period aria-label="设置">
          <svg width="44" height="40" viewBox="0 0 44 40" fill="none" stroke="#666" strokeWidth="3">
            <path d="M12.500 2h19L42 20 31.500 38h-19L2 20z" strokeLinejoin="round" />
            <circle cx="22" cy="20" r="6" />
          </svg>
        </Period>
      </Periods>
      <Legend>
        <LegendItem $color="#f5b01e">均价: 7.04</LegendItem>
        <LegendItem $color="#dc3030">最新: 7.21</LegendItem>
        <LegendItem $color="#dc3030">0.51</LegendItem>
        <LegendItem $color="#dc3030">7.61%</LegendItem>
        <LegendItem $color={C.blue} $wide>合肥城建: 4.88%</LegendItem>
        <Down $color={C.blue} />
      </Legend>

      <Market>
        <ChartBox>
          <Charts />
          <ChartTools $top={752}>
            <Picker>
              <select aria-label="副图一"><option>成交对比</option></select>
              <Down />
            </Picker>
            <Help aria-label="说明">?</Help>
          </ChartTools>
          <Expand aria-label="全屏">
            <svg width="30" height="30" viewBox="0 0 30 30" fill="none" stroke="#666" strokeWidth="3">
              <path d="M2 15V2h13M28 15v13H15" />
            </svg>
          </Expand>
          <ChartTools $top={1005}>
            <Picker>
              <select aria-label="副图二"><option>分时量</option></select>
              <Down />
            </Picker>
            <Help aria-label="说明">?</Help>
            量:<Reading $color="#bbb">0</Reading>
            现手:<Reading $color={C.red}>115</Reading>
          </ChartTools>
        </ChartBox>
        <Book>
          <BookTabs>
            <BookTab $active>十档</BookTab>
            <BookTab>成交</BookTab>
          </BookTabs>
          <DepthLink href="#depth">
            全景500档
            <svg width="14" height="24" viewBox="0 0 14 24" fill="none" stroke="#e03a3a" strokeWidth="2">
              <path d="M1.500 1.500 12 12 1.500 22.500" />
            </svg>
          </DepthLink>
          <LevelTable rows={SELLS} tint="#cbe9cb" />
          <Ratio />
          <LevelTable rows={BUYS} tint="#f9d4d5" />
          <DetailBar>明细<Up /></DetailBar>
          <Ticks>
            <tbody>
              <tr><Tick $w={88}>14:56</Tick><Tick $w={76} $color={C.red}>7.21</Tick><Tick $end $color={C.green}>31.6万</Tick></tr>
              <tr><Tick>14:56</Tick><Tick $color={C.red}>7.21</Tick><Tick $end $color={C.green}>25.5万</Tick></tr>
              <tr><Tick>14:57</Tick><Tick $color={C.red}>7.21</Tick><Tick $end $color={C.red}>8.29万</Tick></tr>
            </tbody>
          </Ticks>
        </Book>
      </Market>

      <Talk>
        <Danmu aria-label="弹幕">弹<DanmuOff /></Danmu>
        <TalkHint href="#talk">3.6万人正在热议...</TalkHint>
        <Vote>
          <VoteButton $bull>看涨58%</VoteButton>
          <VoteButton>看跌42%</VoteButton>
        </Vote>
      </Talk>
      <Band />

      <Sections>
        <Section $cut href="#l2">L2</Section>
        <Section href="#view">看点</Section>
        <Section href="#news">资讯</Section>
        <Section href="#tape">盘口</Section>
        <Section href="#fund" $active>资金</Section>
        <Section href="#f10">简况(F10)</Section>
        <Section href="#diagnose">诊股</Section>
        <Section href="#finance">财务</Section>
      </Sections>

      <Footer>
        <Dock>
          <IndexCell href="#index">
            <Up $color="#b4b4b4" $size={12} />
            <IndexValue>12983.64</IndexValue>
            <IndexChange><span>深证</span>0.84%</IndexChange>
          </IndexCell>
          <DockItem>
            <svg {...dockIcon}>
              <path d="M5 2h28l12 13v31H5zM32 2v14h13M14 24h22M14 34h22" strokeLinejoin="round" />
            </svg>
            下单
          </DockItem>
          <DockItem>
            <svg {...dockIcon}>
              <path d="M30 4.500a20 20 0 0 1 20 20V44H30a20 20 0 0 1 0-39.500z" />
              <path d="M17 1.500a26 26 0 0 0 0 45" />
              <path d="M30 13l3.600 7.400 8 1.100-5.800 5.700 1.400 8.100-7.200-3.900-7.200 3.900 1.400-8.100-5.800-5.700 8-1.100z" strokeLinejoin="round" />
            </svg>
            社区
          </DockItem>
          <DockItem>
            <svg {...dockIcon}>
              <rect x="3" y="4" width="46" height="41" />
              <path d="M15 24h22" />
            </svg>
            删自选
          </DockItem>
          <DockItem>
            <svg {...dockIcon}>
              <circle cx="26" cy="24" r="21.500" />
              <path d="M18.500 17.500h15M18.500 24h15M18.500 30.500h15" />
            </svg>
            功能
          </DockItem>
        </Dock>
        <HomeBar />
        <Watermark>小红书</Watermark>
      </Footer>
    </Page>
  );
}
